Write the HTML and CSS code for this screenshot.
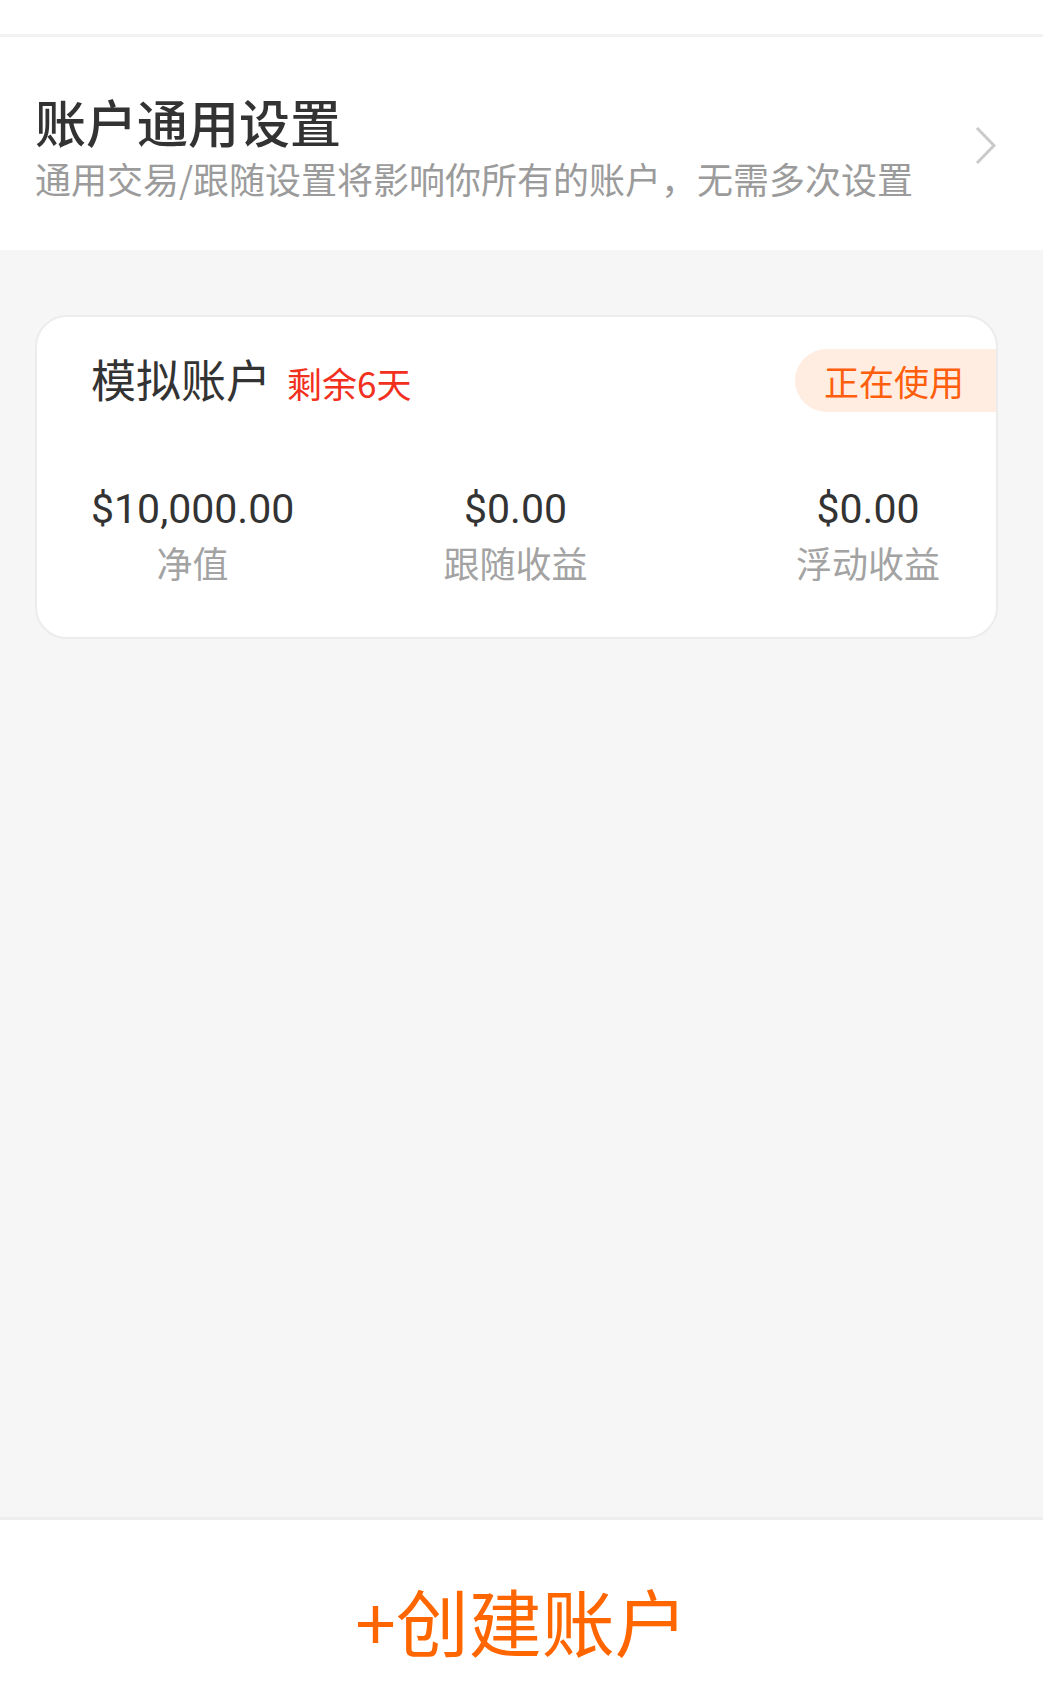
FILE: index.html
```html
<html>

<head>
    <meta charset="UTF-8">
    <title>账户</title>
    <link rel="stylesheet" href="styles.css">
</head>

<body>
    <div class="topbar"></div>

    <!-- 通用设置 -->
    <div class="settings">
        <div class="settings_text">
            <h2>账户通用设置</h2>
            <p>通用交易/跟随设置将影响你所有的账户，无需多次设置</p>
        </div>
        <svg class="chevron" width="24" height="40" viewBox="0 0 24 40">
            <path d="M3 2 L20 19.5 L3 37" fill="none" stroke="#cacaca" stroke-width="3" />
        </svg>
    </div>

    <div class="main">
        <div class="card">
            <div class="card_head">
                <div class="card_title">
                    <span class="name">模拟账户</span>
                    <span class="days">剩余6天</span>
                </div>
                <span class="badge">正在使用</span>
            </div>
            <div class="stats">
                <div class="stat first">
                    <span class="value">$10,000.00</span>
                    <span class="label">净值</span>
                </div>
                <div class="stat middle">
                    <span class="value">$0.00</span>
                    <span class="label">跟随收益</span>
                </div>
                <div class="stat last">
                    <span class="value">$0.00</span>
                    <span class="label">浮动收益</span>
                </div>
            </div>
        </div>
    </div>

    <div class="footer">
        <span class="create">+创建账户</span>
    </div>
</body>

</html>
```

FILE: styles.css
```css
body {
    margin: 0;
    font-family: "Noto Sans CJK SC", "Noto Sans", sans-serif;
    font-weight: normal;
    background-color: #f6f6f6;
}

.topbar {
    height: 34px;
    background-color: white;
    border-bottom: 3px solid #f2f2f2;
}

div.settings {
    display: flex;
    align-items: center;
    justify-content: space-between;
    background-color: white;
    padding: 59px 45px 54px 35px;
}

.settings_text h2 {
    margin: 0;
    font-size: 51px;
    line-height: 50px;
    font-weight: 500;
    color: #333;
}

.settings_text p {
    margin: 14px 0 0 0;
    font-size: 36px;
    line-height: 36px;
    color: #9b9b9b;
}

.chevron {
    display: block;
}

div.main {
    height: 1202px;
    padding-top: 65px;
}

div.card {
    margin: 0 45px 0 35px;
    background-color: white;
    border: 2px solid #ececec;
    border-radius: 32px;
    overflow: hidden;
}

.card_head {
    display: flex;
    align-items: center;
    justify-content: space-between;
    margin-top: 32px;
    padding-left: 54px;
}

.card_title {
    display: flex;
    align-items: baseline;
}

.name {
    font-size: 45px;
    line-height: 50px;
    color: #333;
}

.days {
    margin-left: 16px;
    font-size: 35px;
    color: #f2301e;
}

.badge {
    height: 63px;
    line-height: 63px;
    padding: 0 32px 0 29px;
    font-size: 35px;
    color: #ff5f0c;
    background-color: #ffede2;
    border-radius: 32px 0 0 32px;
}

.stats {
    display: grid;
    grid-template-columns: 1fr auto 1fr;
    margin-top: 73px;
    padding: 0 56px 57px 54px;
}

.stat {
    display: flex;
    flex-direction: column;
    align-items: center;
}

.stat.first {
    justify-self: start;
}

.stat.middle {
    justify-self: center;
}

.stat.last {
    justify-self: end;
}

.value {
    font-family: Roboto, "Noto Sans", sans-serif;
    font-size: 41px;
    line-height: 48px;
    color: #333;
}

.label {
    margin-top: 11px;
    font-size: 36px;
    line-height: 36px;
    color: #a3a3a3;
}

div.footer {
    height: 174px;
    border-top: 3px solid #eeeeee;
    background-color: white;
    text-align: center;
}

.create {
    display: inline-block;
    margin-top: 63px;
    font-size: 73px;
    line-height: 73px;
    color: #ff6600;
}
```
